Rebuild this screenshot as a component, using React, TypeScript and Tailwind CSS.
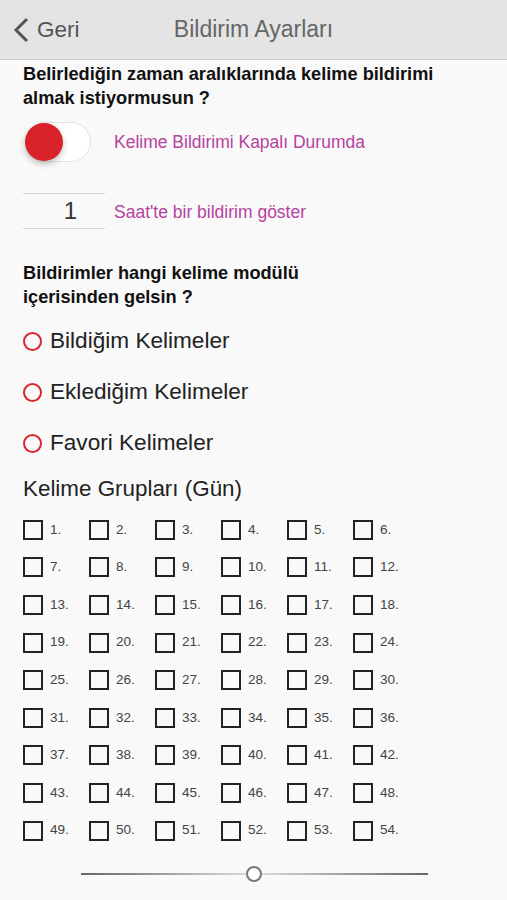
import { useState } from 'react';

const font = { fontFamily: '"Liberation Sans", Arial, sans-serif' };

function Radio({ label }: { label: string }) {
  return (
    <div className="flex h-[51px] items-center">
      <span className="h-[19px] w-[19px] rounded-full border-2 border-[#d9262c]" />
      <span className="ml-[8px] text-[22.6px] leading-none text-[#222]">{label}</span>
    </div>
  );
}

export default function App() {
  const [on, setOn] = useState(false);
  const days = Array.from({ length: 54 }, (_, i) => i + 1);

  return (
    <div className="min-h-[900px] w-[507px] bg-[#f9f9f9]" style={font}>
      <div className="grid h-[60px] grid-cols-[1fr_auto_1fr] items-center border-b border-[#cfcfcf] bg-[#e4e4e4]">
        <div className="flex items-center pl-[13px]">
          <svg width="18" height="26" viewBox="0 0 18 26">
            <polyline points="14,2 3,13 14,24" fill="none" stroke="#555" strokeWidth="3" strokeLinejoin="miter" />
          </svg>
          <span className="ml-[6px] text-[22.5px] text-[#555]">Geri</span>
        </div>
        <div className="text-[23px] text-[#666]">Bildirim Ayarları</div>
        <div />
      </div>

      <div className="px-[23px]">
        <p className="pt-[2px] text-[18.2px] font-bold leading-[24px] text-[#111]">
          Belirlediğin zaman aralıklarında kelime bildirimi almak istiyormusun ?
        </p>

        <div className="mt-[12px] flex h-[40px] items-center">
          <button
            onClick={() => setOn(!on)}
            className="relative ml-[2px] h-[40px] w-[66px] rounded-full border border-[#e3e3e3] bg-white"
          >
            <span className="absolute left-[-1px] top-[0px] h-[38px] w-[38px] rounded-full bg-[#d9222a] shadow-[0_3px_6px_rgba(0,0,0,0.25)]" />
          </button>
          <span className="ml-[23px] text-[17.5px] text-[#b5429f]">Kelime Bildirimi Kapalı Durumda</span>
        </div>

        <div className="mt-[31px] flex items-center">
          <div className="flex h-[36px] w-[82px] items-center justify-end border-y border-[#d6d6d6] pr-[28px] text-[24px] text-[#333]">
            1
          </div>
          <span className="ml-[9px] pt-[2px] text-[17.5px] text-[#b5429f]">Saat'te bir bildirim göster</span>
        </div>

        <p className="mt-[32px] text-[18.2px] font-bold leading-[24px] text-[#111]">
          Bildirimler hangi kelime modülü
          <br />
          içerisinden gelsin ?
        </p>

        <div className="mt-[7px]">
          <Radio label="Bildiğim Kelimeler" />
          <Radio label="Eklediğim Kelimeler" />
          <Radio label="Favori Kelimeler" />
        </div>

        <p className="mt-[6px] text-[22.4px] leading-[28px] text-[#222]">Kelime Grupları (Gün)</p>

        <div className="mt-[8px] grid w-[396px] grid-cols-6">
          {days.map((d) => (
            <div key={d} className="flex h-[37.6px] items-center">
              <span className="h-[20px] w-[20px] border-2 border-[#222]" />
              <span className="ml-[7px] text-[13.5px] text-[#444]">{d}.</span>
            </div>
          ))}
        </div>
      </div>

      <div className="mt-[17px] flex items-center pl-[81px]">
        <div className="h-[2px] w-[165px] bg-[linear-gradient(to_right,#666,#d8d8d8)]" />
        <span className="h-[16px] w-[16px] rounded-full border-2 border-[#777] bg-white" />
        <div className="h-[2px] w-[166px] bg-[linear-gradient(to_right,#d8d8d8,#666)]" />
      </div>
    </div>
  );
}
